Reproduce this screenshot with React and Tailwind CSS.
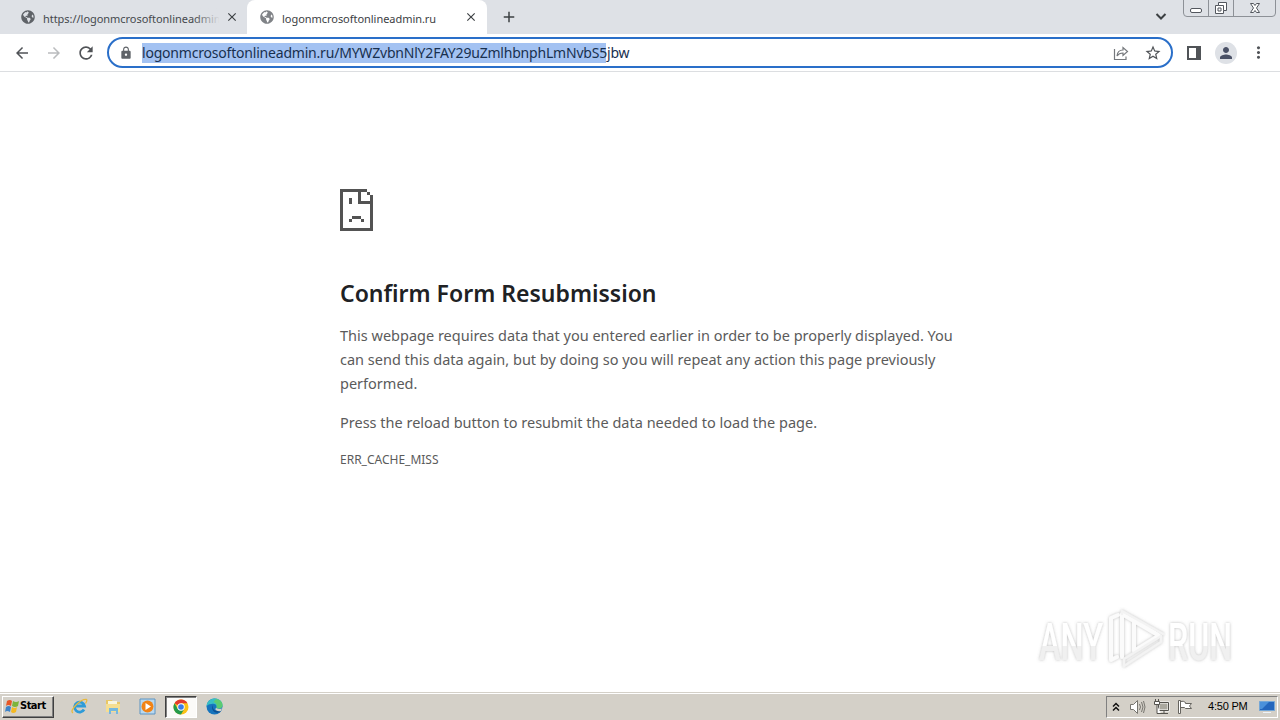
import { FaGlobeAmericas } from 'react-icons/fa'
import { MdArrowBack, MdArrowForward, MdRefresh, MdLock, MdStarBorder, MdPerson, MdMoreVert, MdClose, MdAdd } from 'react-icons/md'

const body = "font-['Noto_Sans',sans-serif]"

function Tab({ title, active }) {
  return (
    <div className={`relative flex h-[34px] w-[240px] shrink-0 items-center pl-[13px] ${active ? 'rounded-t-lg bg-white' : ''}`}>
      <FaGlobeAmericas className={`size-[14px] shrink-0 ${active ? 'text-[#808387]' : 'text-[#5f6368]'}`} />
      <div className="ml-[8px] w-[176px] shrink-0 overflow-hidden whitespace-nowrap">
        <span className={active ? 'text-[11px] tracking-[-0.04px] text-[#3c4043]' : 'text-[11px] tracking-[-0.04px] text-[#45494d]'}>{title}</span>
      </div>
      {!active && <div className="absolute left-[186px] h-5 w-[26px] bg-linear-to-r from-transparent to-[#dee1e6]" />}
      <MdClose className="relative ml-[6px] size-[14px] shrink-0 text-[#3c4043]" />
    </div>
  )
}

function TabStrip() {
  return (
    <div className="flex h-[34px] items-start bg-[#dee1e6] pl-[8px]">
      <div className="-mr-px"><Tab title="https://logonmcrosoftonlineadmin.ru" /></div>
      <Tab title="logonmcrosoftonlineadmin.ru" active />
      <MdAdd className="mt-[8px] ml-[13px] size-[18px] text-[#3c4043]" />
      <svg className="mt-[12px] ml-auto" width="12" height="9" fill="none" stroke="#3c4043" strokeWidth="2">
        <path d="M1.5 2 6 6.5 10.500 2" />
      </svg>
      <svg className="mr-[3px] ml-[16px]" width="94" height="18" fill="none">
        <path d="M.5 0v13q0 3.500 3.500 3.500h85q3.500 0 3.500-3.500V0M25.500 0v16M50.500 0v16" stroke="#8d9197" />
        <rect x="7.500" y="8.500" width="11" height="4" rx="1.500" fill="#fff" stroke="#53575e" />
        <path d="M35.500 2.500h8v8h-3v3h-8v-8h3z" fill="#fff" stroke="#53575e" />
        <path d="M35.500 5.500h5v5M35 8h3v3h-3z" stroke="#53575e" />
        <path d="m67.500 3.500 3 0 1.500 2 1.500-2 3 0-3 4.500 3 4.500-3 0-1.500-2-1.500 2-3 0 3-4.500z" fill="#fff" stroke="#53575e" />
      </svg>
    </div>
  )
}

function Toolbar() {
  return (
    <div className="flex h-[38px] items-center border-b border-[#dcdee1] bg-white pl-[13px]">
      <MdArrowBack className="size-[18px] text-[#505357]" />
      <MdArrowForward className="ml-[14px] size-[18px] text-[#babcbe]" />
      <MdRefresh className="ml-[13px] size-[20px] text-[#505357]" />
      <div className="ml-[11px] flex h-[31px] w-[1066px] items-center rounded-full border-2 border-[#2a6fc9] pr-[9px] pl-[10px]">
        <MdLock className="size-[14px] text-[#5f6368]" />
        <span className="ml-[9px] h-[20px] w-[464px] bg-[#a3c2f2] text-[14px] leading-[20px] tracking-[-0.2px] whitespace-nowrap text-[#18304f]">
          logonmcrosoftonlineadmin.ru/MYWZvbnNlY2FAY29uZmlhbnphLmNvbS5jbw
        </span>
        <svg className="ml-auto" width="16" height="16" fill="none" stroke="#75787c" strokeWidth="1.200">
          <path d="M1.500 4v10.500h11.500v-3" />
          <path d="M4 11q.5-6 6-6V2.500l4.500 4L10 10.500V8Q6 8 4 11z" />
        </svg>
        <MdStarBorder className="ml-[15px] size-[18px] text-[#505357]" />
      </div>
      <svg className="ml-[14px]" width="14" height="14">
        <path d="M1 1h12v12H1z" fill="none" stroke="#505357" strokeWidth="2" />
        <path d="M9 1h4v12H9z" fill="#505357" />
      </svg>
      <div className="ml-[14px] flex size-[22px] items-center justify-center rounded-full bg-[#dee1e6]">
        <MdPerson className="size-[18px] text-[#4a5166]" />
      </div>
      <MdMoreVert className="ml-[12px] size-[19px] text-[#505357]" />
    </div>
  )
}

function SadFile() {
  return (
    <svg width="33" height="42" viewBox="0 0 11 14" fill="#535353" shapeRendering="crispEdges">
      <path d="M0 0h9v1H7v3h3V2h1v12H0zM1 1v12h9V5H6V1z" fillRule="evenodd" />
      <path d="M9 1h1v1H9zM3 3h1v2H3zM4 9h3v1H4zM3 10h1v1H3zM7 10h1v1H7z" />
    </svg>
  )
}

function Watermark() {
  return (
    <svg className="absolute top-[530px] left-[1028px]" width="220" height="85">
      <defs>
        <linearGradient id="shade" x1="0" y1="0" x2="0" y2="1">
          <stop offset="0.550" stopColor="#fff" />
          <stop offset="0.560" stopColor="#f0f0f0" />
        </linearGradient>
        <filter id="soft" x="-10%" y="-20%" width="120%" height="140%">
          <feDropShadow dx="0" dy="0" stdDeviation="1.800" floodColor="#777" floodOpacity="0.500" />
        </filter>
      </defs>
      <g filter="url(#soft)" fill="url(#shade)" fontSize="52" fontFamily="Roboto, sans-serif" fontWeight="500">
        <text x="11" y="58" textLength="64" lengthAdjust="spacingAndGlyphs">ANY</text>
        <text x="140" y="58" textLength="64" lengthAdjust="spacingAndGlyphs">RUN</text>
      </g>
      <g filter="url(#soft)" fill="none" stroke="#fbfbfb" strokeWidth="4" strokeLinejoin="round" strokeLinecap="round">
        <path d="M90 13 83 16v42l6-3" />
        <path d="M106 18v31l25-15.500z" />
        <path d="M130 33 94 12v43" />
        <path d="M133 34v6L96 64v-7l37-23M94 12v-3l41 23" strokeWidth="2.500" stroke="#f3f3f3" />
      </g>
    </svg>
  )
}

function ErrorPage() {
  return (
    <div className="relative h-[620px] bg-white pt-[117px] pl-[340px] text-[#5b5b5b]">
      <SadFile />
      <h1 className="mt-[46px] text-[23px] leading-[32px] font-semibold whitespace-nowrap text-[#202124]">Confirm Form Resubmission</h1>
      <div className="mt-[14px] text-[14.500px] leading-[24px] whitespace-nowrap">
        <p>This webpage requires data that you entered earlier in order to be properly displayed. You</p>
        <p>can send this data again, but by doing so you will repeat any action this page previously</p>
        <p>performed.</p>
        <p className="mt-[15px]">Press the reload button to resubmit the data needed to load the page.</p>
      </div>
      <p className="mt-[17px] text-[12px] leading-[18px] whitespace-nowrap">ERR_CACHE_MISS</p>
      <Watermark />
    </div>
  )
}

function Flag() {
  return (
    <svg width="16" height="16" viewBox="0 0 16 16">
      <path d="M3 2q3-2 5 0L7 7Q4 5 2 7z" fill="#e75727" />
      <path d="M9 2q3 2 6 0l-1 5q-3 2-6 0z" fill="#7db43b" />
      <path d="M2 8q3-2 5 0l-1 5q-3-2-5 0z" fill="#3e83c9" />
      <path d="M8 8q3 2 5 0l-1 5q-3 2-5 0z" fill="#f5b921" />
    </svg>
  )
}

function ExplorerIcon() {
  return (
    <svg width="17" height="17" viewBox="0 0 17 17" fill="none">
      <path d="M13 11.500A5 5 0 1 1 13.500 8H5" stroke="#2e9bd8" strokeWidth="2.800" />
      <path d="M2 15Q-1 13 5 7T15.500 1.500q1 1-1 4" stroke="#e8b93c" strokeWidth="1.300" />
    </svg>
  )
}

function FolderIcon() {
  return (
    <svg width="17" height="17" viewBox="0 0 17 17">
      <path d="M1 2h6l1 2h7v10H1z" fill="#e8c766" />
      <path d="M3 3h9v4H3z" fill="#f8f5df" />
      <path d="M1 6h14v8H1z" fill="#f5de91" />
      <path d="M4 16v-6h9v6h-2v-3H6v3z" fill="#75b8df" />
    </svg>
  )
}

function MediaIcon() {
  return (
    <svg width="17" height="17" viewBox="0 0 17 17">
      <path d="M1 1h15v15H1z" fill="#b9d8ef" stroke="#5c94c2" />
      <circle cx="8.500" cy="8.500" r="6" fill="#f18316" />
      <path d="m6.500 5 5.500 3.500L6.500 12z" fill="#fff" />
    </svg>
  )
}

function ChromeIcon() {
  return (
    <svg width="16" height="16" viewBox="0 0 16 16">
      <circle cx="8" cy="8" r="7.500" fill="#fbc116" />
      <path d="M8 8 1.500 4.250A7.500 7.500 0 0 1 14.500 4.250H8z" fill="#e33b2e" />
      <path d="M1.500 4.250A7.500 7.500 0 0 0 8 15.500l3.200-5.600L8 8 4.800 9.900z" fill="#249a4b" />
      <circle cx="8" cy="8" r="3.700" fill="#fff" />
      <circle cx="8" cy="8" r="2.800" fill="#3a7ce9" />
    </svg>
  )
}

function EdgeIcon() {
  return (
    <svg width="17" height="17" viewBox="0 0 17 17">
      <circle cx="8.500" cy="8.500" r="8" fill="#1674bd" />
      <path d="M.5 8.500C1-2 16-2 16.500 7c0 3-3 4-6 3 1-3-2-5-5-4-3 0-4 1-5 2.500z" fill="#38bfc4" />
      <path d="M10 1c5 1 7 4 6.500 7-1 3-4 3-6 2 1-4-1-5-3-6z" fill="#5bcb72" />
      <path d="M7 7c-1 4 2 7 7 6 1 0 1 0 0 1-5 3-10-3-7-7z" fill="#0d4f91" />
      <path d="M10.500 10q2 1.500 5.500.5l-1 2.500q-4 1-6-2z" fill="#d4d0c8" />
    </svg>
  )
}

function Tray() {
  return (
    <div className="ml-auto flex h-[22px] w-[172px] items-center border border-t-[#808080] border-r-white border-b-white border-l-[#808080] pl-[5px]">
      <svg width="8" height="10" fill="none" stroke="#111" strokeWidth="1.500">
        <path d="m1 4.500 3-3 3 3M1 8.500l3-3 3 3" />
      </svg>
      <svg className="ml-[9px]" width="17" height="16" fill="none" stroke="#77756f">
        <path d="M1.500 5.500h3l4-4v13l-4-4h-3z" fill="#fff" />
        <path d="M10.500 5q2 3 0 6M12.500 3q3 5 0 10M14.500 2q3 6 0 12" />
      </svg>
      <svg className="ml-[7px]" width="17" height="16" fill="none" stroke="#55534e">
        <path d="M5.500 3.500h10v8h-10z" fill="#aaa89f" stroke="#fff" strokeWidth="2" />
        <path d="M5.500 3.500h10v8h-10zM7 14.500h8M11 12v2" />
        <path d="M1.500 2.500h5v3h-5zM2.500 0v2M5.500 0v2M4 6v8.500h4" fill="#fff" />
      </svg>
      <svg className="ml-[6px]" width="18" height="16" fill="none" stroke="#66645f">
        <path d="M2.500 1.500h2v13h-2zM4.500 2.500q3-1 5 1v1h6l-2 2.500 2 2.500h-6l-1-1h-4z" fill="#fff" />
      </svg>
      <span className="ml-[14px] w-[40px] font-['Liberation_Sans',sans-serif] text-[11px] tracking-[-0.2px] whitespace-nowrap text-black">4:50 PM</span>
      <svg className="ml-[11px]" width="16" height="14">
        <path d="M.5 1.500h15v9H.5z" fill="#2466bd" stroke="#75a7d7" />
        <path d="M1 2h9L3 9H1z" fill="#4b91db" />
        <path d="M4 12h8v1H4z" fill="#edf3f9" />
      </svg>
    </div>
  )
}

function Taskbar() {
  return (
    <div className="flex h-[28px] items-center border-t border-[#d4d0c8] bg-[#d4d0c8] pr-[2px] pl-[2px] shadow-[inset_0_1px_0_#fff]">
      <div className="flex h-[22px] w-[52px] items-center border border-t-white border-r-[#404040] border-b-[#404040] border-l-white pl-px shadow-[inset_-1px_-1px_0_#808080]">
        <Flag />
        <span className="font-['DejaVu_Sans_Condensed','DejaVu_Sans',sans-serif] text-[11px] font-bold tracking-[-0.5px] text-black">Start</span>
      </div>
      <div className="ml-[17px]"><ExplorerIcon /></div>
      <div className="ml-[17px]"><FolderIcon /></div>
      <div className="ml-[17px]"><MediaIcon /></div>
      <div className="ml-[9px] flex h-[22px] w-[32px] items-center justify-center border border-t-[#404040] border-r-white border-b-white border-l-[#404040] bg-[#fbfaf8] shadow-[inset_1px_1px_0_#808080]">
        <ChromeIcon />
      </div>
      <div className="ml-[9px]"><EdgeIcon /></div>
      <Tray />
    </div>
  )
}

export default function App() {
  return (
    <div className={`flex h-[720px] w-[1280px] flex-col overflow-hidden ${body}`}>
      <TabStrip />
      <Toolbar />
      <ErrorPage />
      <Taskbar />
    </div>
  )
}
